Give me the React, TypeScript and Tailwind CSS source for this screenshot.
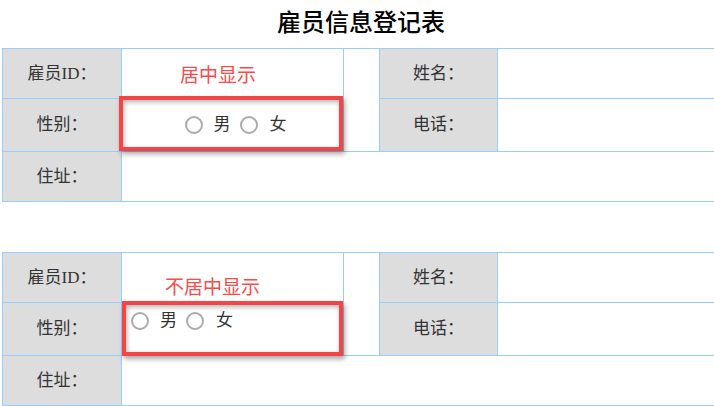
const cjk = '[font-family:"Liberation_Serif","Noto_Sans_CJK_SC",serif]'

function Label({ text }: { text: string }) {
  return (
    <div className={`flex items-center justify-center border-r border-b border-[#99ccff] bg-[#dddddd] text-[17px] text-[#333] ${cjk}`}>
      {text}
    </div>
  )
}

function Radio() {
  return <span className="inline-block h-[18px] w-[18px] rounded-full border-2 border-[#aaaaaa] bg-white" />
}

function Gender({ centered }: { centered: boolean }) {
  return (
    <div
      className={`flex border-r border-b border-[#99ccff] ${
        centered ? 'items-center justify-center pl-[6px]' : 'items-start justify-start pt-[5px] pl-[9px]'
      }`}
    >
      <div className={`flex items-center text-[17px] text-[#333] ${cjk}`}>
        <Radio />
        <span className="ml-[11px]">男</span>
        <span className="ml-[9px] flex">
          <Radio />
        </span>
        <span className="ml-[12px]">女</span>
      </div>
    </div>
  )
}

function EmployeeTable({ centered }: { centered: boolean }) {
  const cell = 'border-r border-b border-[#99ccff]'
  return (
    <div className="ml-[2px] grid w-[720px] grid-cols-[119px_222px_36px_118px_1fr] grid-rows-[50px_53px_50px] border-t border-l border-[#99ccff]">
      <Label text="雇员ID：" />
      <div className={cell} />
      <div className={`${cell} row-span-2`} />
      <Label text="姓名：" />
      <div className={cell} />
      <Label text="性别：" />
      <Gender centered={centered} />
      <Label text="电话：" />
      <div className={cell} />
      <Label text="住址：" />
      <div className={`${cell} col-span-4`} />
    </div>
  )
}

export default function App() {
  return (
    <div className="relative h-[406px] w-[714px] overflow-hidden bg-white">
      <h1 className={`flex h-[48px] items-center justify-center pl-[8px] pb-[3px] text-[24px] font-medium text-black ${cjk}`}>
        雇员信息登记表
      </h1>
      <EmployeeTable centered />
      <div className="h-[50px]" />
      <EmployeeTable centered={false} />

      {/* annotations */}
      <span className='absolute left-[180px] top-[64px] text-[19px] leading-none text-[#ff4848] [font-family:"Noto_Sans_CJK_SC",sans-serif]'>
        居中显示
      </span>
      <div className="absolute left-[119px] top-[96px] h-[55px] w-[224px] border-4 border-[#f44444] shadow-[2px_3px_5px_rgba(0,0,0,0.35),inset_1px_2px_5px_rgba(0,0,0,0.3)]" />
      <span className='absolute left-[165px] top-[276px] text-[19px] leading-none text-[#ff4848] [font-family:"Noto_Sans_CJK_SC",sans-serif]'>
        不居中显示
      </span>
      <div className="absolute left-[122px] top-[301px] h-[55px] w-[221px] border-4 border-[#f44444] shadow-[2px_3px_5px_rgba(0,0,0,0.35),inset_1px_2px_5px_rgba(0,0,0,0.3)]" />
    </div>
  )
}
